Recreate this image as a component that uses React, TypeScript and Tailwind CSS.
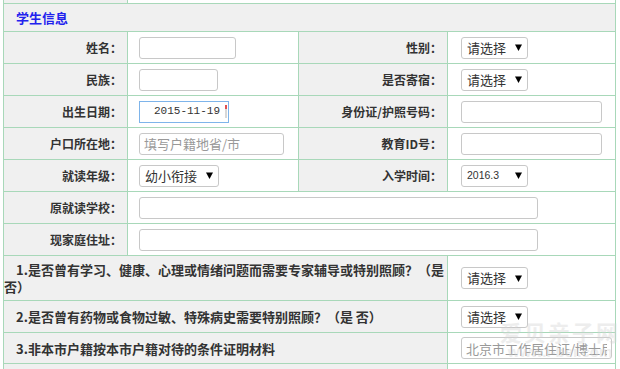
import React from "react";

const labelCls =
  "border-r border-b border-[#a8d8b9] bg-[#f0f0f0] flex items-center justify-end pr-[5px] text-[12px] font-bold text-[#333]";
const val2Cls = "border-r border-b border-[#a8d8b9] bg-white flex items-center pl-[11px]";
const val4Cls = "border-r border-b border-[#a8d8b9] bg-white flex items-center pl-[13px]";
const inputCls =
  "h-[22px] border border-[#c8c8c8] rounded-[3px] bg-white outline-none px-[4px] text-[13px] text-[#333] placeholder:text-[#999]";

function Arrow() {
  return (
    <svg width="7" height="7" viewBox="0 0 7 7" className="shrink-0">
      <polygon points="0,0.5 7,0.5 3.5,7" fill="#000" />
    </svg>
  );
}

function Select({ text, className, mono }: { text: string; className: string; mono?: boolean }) {
  return (
    <div
      className={
        "h-[22px] border border-[#c8c8c8] rounded-[3px] bg-white flex items-center justify-between pl-[5px] pr-[5px] text-[#333] " +
        className
      }
    >
      <span className={mono ? "text-[10.5px] font-['Liberation_Sans',sans-serif]" : "text-[13px]"}>{text}</span>
      <Arrow />
    </div>
  );
}

function Q({ children, h }: { children: React.ReactNode; h: string }) {
  return (
    <div
      className={
        "col-span-3 border-r border-b border-[#a8d8b9] bg-[#f0f0f0] flex items-center text-[13px] leading-[17px] font-bold text-[#333] " +
        h
      }
    >
      <div className="indent-[12px]">{children}</div>
    </div>
  );
}

export default function App() {
  return (
    <div className="relative w-[620px] h-[369px] overflow-hidden bg-white font-['Noto_Sans_CJK_SC','Noto_Sans',sans-serif]">
      <div className="ml-[3px] w-[613px] border-l border-[#a8d8b9] grid grid-cols-[124px_171px_149px_168px]">
        {/* partial top row */}
        <div className="h-[4px] border-r border-b border-[#a8d8b9] bg-[#f0f0f0]" />
        <div className="col-span-3 h-[4px] border-r border-b border-[#a8d8b9] bg-white" />

        {/* header */}
        <div className="col-span-4 h-[28px] border-r border-b border-[#a8d8b9] bg-[#f0f0f0] flex items-center pl-[12px] text-[13px] font-bold text-[#2222ee]">
          学生信息
        </div>

        {/* row 1 */}
        <div className={labelCls + " h-[32px]"}>姓名：</div>
        <div className={val2Cls}>
          <input readOnly className={inputCls + " w-[97px]"} />
        </div>
        <div className={labelCls}>性别：</div>
        <div className={val4Cls}>
          <Select text="请选择" className="w-[67px]" />
        </div>

        {/* row 2 */}
        <div className={labelCls + " h-[32px]"}>民族：</div>
        <div className={val2Cls}>
          <input readOnly className={inputCls + " w-[79px]"} />
        </div>
        <div className={labelCls}>是否寄宿：</div>
        <div className={val4Cls}>
          <Select text="请选择" className="w-[67px]" />
        </div>

        {/* row 3 */}
        <div className={labelCls + " h-[32px]"}>出生日期：</div>
        <div className={val2Cls}>
          <div className="relative h-[22px] w-[90px] border border-[#7eb4ea] bg-white flex items-center pl-[14px] text-[11px] text-[#333] font-['Liberation_Mono',monospace]">
            2015-11-19
            <div className="absolute right-[1px] top-[3px] w-[2px] h-[4px] bg-[#e05050]" />
            <div className="absolute right-[1px] top-[7px] w-[2px] h-[9px] bg-[#d8d8d8]" />
          </div>
        </div>
        <div className={labelCls}>身份证/护照号码：</div>
        <div className={val4Cls}>
          <input readOnly className={inputCls + " w-[141px]"} />
        </div>

        {/* row 4 */}
        <div className={labelCls + " h-[32px]"}>户口所在地：</div>
        <div className={val2Cls}>
          <input readOnly placeholder="填写户籍地省/市" className={inputCls + " w-[145px]"} />
        </div>
        <div className={labelCls}>教育ID号：</div>
        <div className={val4Cls}>
          <input readOnly className={inputCls + " w-[141px]"} />
        </div>

        {/* row 5 */}
        <div className={labelCls + " h-[32px]"}>就读年级：</div>
        <div className={val2Cls}>
          <Select text="幼小衔接" className="w-[80px]" />
        </div>
        <div className={labelCls}>入学时间：</div>
        <div className={val4Cls}>
          <Select text="2016.3" className="w-[67px]" mono />
        </div>

        {/* row 6 */}
        <div className={labelCls + " h-[32px]"}>原就读学校：</div>
        <div className={"col-span-3 " + val2Cls}>
          <input readOnly className={inputCls + " w-[399px]"} />
        </div>

        {/* row 7 */}
        <div className={labelCls + " h-[32px]"}>现家庭住址：</div>
        <div className={"col-span-3 " + val2Cls}>
          <input readOnly className={inputCls + " w-[399px]"} />
        </div>

        {/* Q1 */}
        <Q h="h-[45px]">1.是否曾有学习、健康、心理或情绪问题而需要专家辅导或特别照顾？（是否）</Q>
        <div className={val4Cls}>
          <Select text="请选择" className="w-[67px]" />
        </div>

        {/* Q2 */}
        <Q h="h-[32px]">2.是否曾有药物或食物过敏、特殊病史需要特别照顾？（是 否）</Q>
        <div className={val4Cls}>
          <Select text="请选择" className="w-[67px]" />
        </div>

        {/* Q3 */}
        <Q h="h-[31px]">3.非本市户籍按本市户籍对待的条件证明材料</Q>
        <div className={val4Cls}>
          <input
            readOnly
            placeholder="北京市工作居住证/博士后"
            className={inputCls + " w-[151px] px-[3px] placeholder:text-[#888]"}
          />
        </div>

        {/* Q4 partial */}
        <div className="col-span-3 h-[12px] border-r border-b border-[#a8d8b9] bg-[#f0f0f0]" />
        <div className="h-[12px] border-r border-b border-[#a8d8b9] bg-white" />
      </div>

      {/* watermark */}
      <div className="pointer-events-none absolute left-[500px] top-[318px] flex flex-col items-center opacity-40">
        <div className="text-[22px] leading-[26px] font-bold text-[#d4d4d4] tracking-[2px]">爱贝亲子网</div>
        <div className="text-[15px] leading-[16px] font-bold text-[#d4d4d4] font-['Liberation_Sans',sans-serif]">
          www.i-bei.com
        </div>
      </div>
    </div>
  );
}
